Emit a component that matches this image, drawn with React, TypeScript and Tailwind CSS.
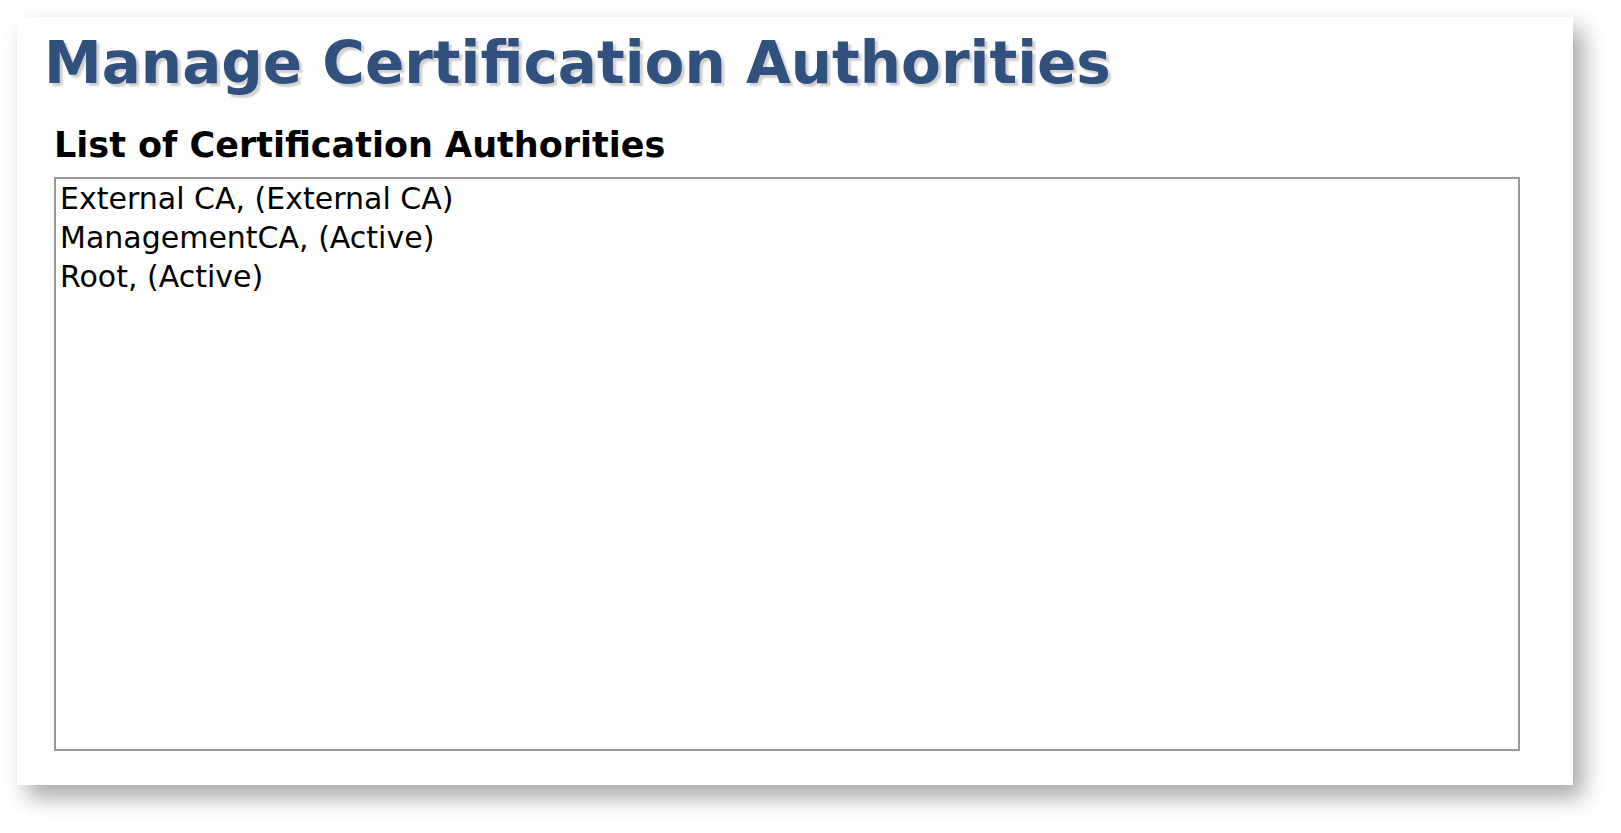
const cas = ["External CA, (External CA)", "ManagementCA, (Active)", "Root, (Active)"];

export default function App() {
  return (
    <div className="min-h-[833px] w-full bg-white pt-[17px] pl-[17px] font-['DejaVu_Sans',sans-serif]">
      <div className="w-[1556px] h-[768px] bg-white shadow-[10px_12px_22px_rgba(0,0,0,0.35)] pt-[3px] pl-[27px]">
        <h1 className="text-[58px] font-bold text-[#30507d] [text-shadow:3px_3px_2px_#d0d0d0]">
          Manage Certification Authorities
        </h1>
        <div className="pl-[10px]">
          <h2 className="mt-[17px] text-[35px] font-bold text-black leading-tight">List of Certification Authorities</h2>
          <div className="mt-[9px] w-[1466px] h-[574px] border-2 border-[#999999] px-[4px] text-[30px] leading-[39px] text-black">
            {cas.map((c) => (
              <div key={c}>{c}</div>
            ))}
          </div>
        </div>
      </div>
    </div>
  );
}
